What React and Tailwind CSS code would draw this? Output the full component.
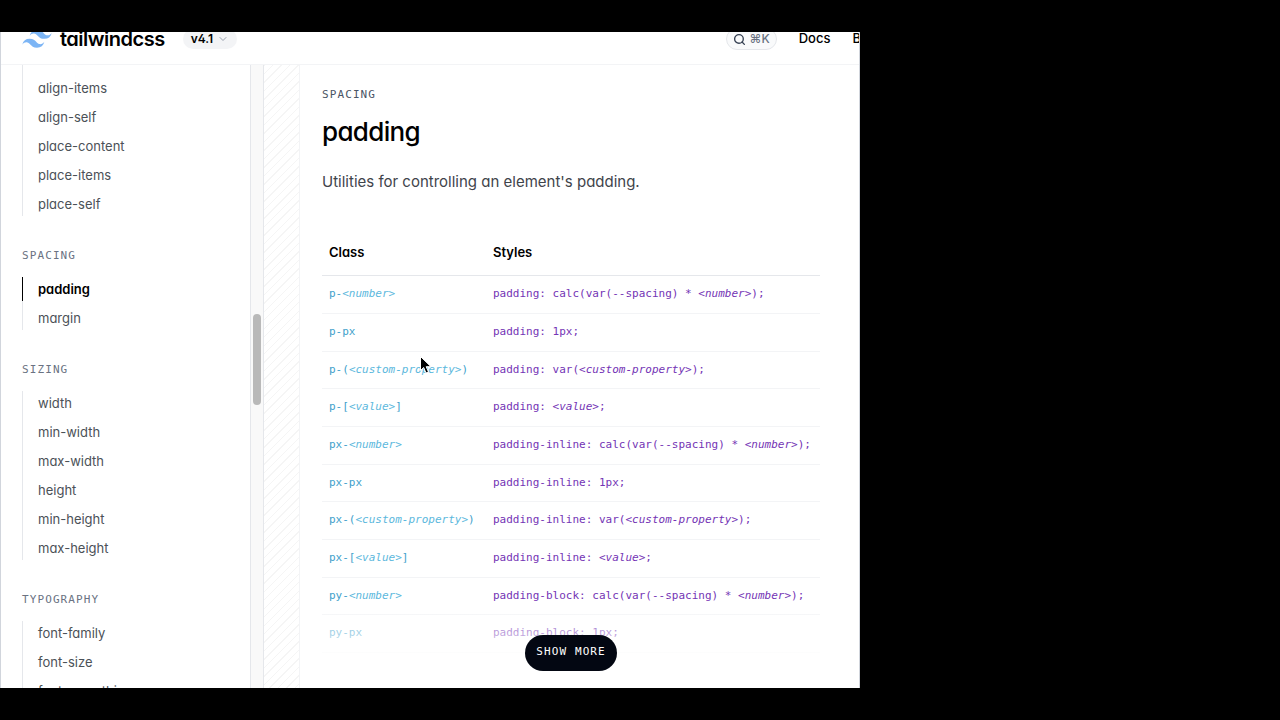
import { LuChevronDown, LuSearch } from 'react-icons/lu'

const sections = [
  { items: ['align-items', 'align-self', 'place-content', 'place-items', 'place-self'] },
  { title: 'SPACING', items: ['padding', 'margin'] },
  { title: 'SIZING', items: ['width', 'min-width', 'max-width', 'height', 'min-height', 'max-height'] },
  { title: 'TYPOGRAPHY', items: ['font-family', 'font-size', 'font-smoothing'] },
]

const rows = [
  ['p-<number>', 'padding: calc(var(--spacing) * <number>);'],
  ['p-px', 'padding: 1px;'],
  ['p-(<custom-property>)', 'padding: var(<custom-property>);'],
  ['p-[<value>]', 'padding: <value>;'],
  ['px-<number>', 'padding-inline: calc(var(--spacing) * <number>);'],
  ['px-px', 'padding-inline: 1px;'],
  ['px-(<custom-property>)', 'padding-inline: var(<custom-property>);'],
  ['px-[<value>]', 'padding-inline: <value>;'],
  ['py-<number>', 'padding-block: calc(var(--spacing) * <number>);'],
  ['py-px', 'padding-block: 1px;'],
]

// Sets every <placeholder> in italics
function Code({ text, className, placeholder }) {
  return (
    <code className={className}>
      {text.split(/(<[^>]+>)/).map((part, i) =>
        part.startsWith('<') ? <i key={i} className={placeholder}>{part}</i> : part
      )}
    </code>
  )
}

function Header() {
  return (
    <header className="h-[33px] shrink-0 overflow-hidden border-b border-gray-100">
      <div className="-mt-5 flex h-[54px] items-center pl-[21px] text-[13px] font-medium text-black">
        <a href="#" className="flex items-center gap-2" aria-label="tailwindcss home">
          <svg viewBox="0 0 54 33" className="h-[18px] w-[30px]" fill="#7cb5f5">
            <path d="M27 0c-7.2 0-11.7 3.6-13.5 10.8 2.7-3.6 5.85-4.95 9.45-4.05 2.054.513 3.522 2.004 5.147 3.653C30.744 13.09 33.808 16.2 40.5 16.2c7.2 0 11.7-3.6 13.5-10.8-2.7 3.6-5.85 4.95-9.45 4.05-2.054-.513-3.522-2.004-5.147-3.653C36.756 3.11 33.692 0 27 0zM13.5 16.2C6.3 16.2 1.8 19.8 0 27c2.7-3.6 5.85-4.95 9.45-4.05 2.054.514 3.522 2.004 5.147 3.653C17.244 29.29 20.308 32.4 27 32.4c7.2 0 11.7-3.6 13.5-10.8-2.7 3.6-5.85 4.95-9.45 4.05-2.054-.513-3.522-2.004-5.147-3.653C23.256 19.31 20.192 16.2 13.5 16.2z" />
          </svg>
          <span className="text-xl leading-6 font-semibold tracking-tight">tailwindcss</span>
        </a>
        <button type="button" className="ml-[18px] flex h-5 items-center gap-1 rounded-full bg-gray-100 px-2 text-[12px] font-semibold">
          v4.1
          <LuChevronDown className="size-3 text-gray-400" />
        </button>
        <div className="flex-1" />
        <button type="button" aria-label="Search" className="flex h-[22px] items-center gap-1 rounded-full border border-gray-200 bg-gray-50 px-[6px] text-xs text-gray-500">
          <LuSearch className="size-[13px] text-gray-700" strokeWidth={2.5} />
          ⌘K
        </button>
        <a href="#" className="ml-[22px]">Docs</a>
        <a href="#" className="-mr-[21px] ml-[22px]">Blog</a>
      </div>
    </header>
  )
}

function Sidebar() {
  return (
    <aside className="flex w-[263px] shrink-0 border-r border-gray-200">
      <nav className="flex-1 overflow-hidden border-r border-gray-200 pl-[21px]">
        {sections.map(({ title, items }) => (
          <section key={items[0]} className="mb-8">
            {title && <h2 className="mb-[13px] font-['DejaVu_Sans_Mono',monospace] text-[11px] leading-4 tracking-widest text-gray-500">{title}</h2>}
            <ul className="flex flex-col gap-[5px] border-l border-gray-200 text-[13px] leading-6 text-[#4b5157] first:pt-[11px]">
              {items.map((item) => (
                <li key={item} className="-ml-px flex">
                  <a
                    href={`#${item}`}
                    className={item === 'padding' ? 'border-l border-black pl-[15px] font-semibold text-black' : 'border-l border-transparent pl-[15px]'}
                  >
                    {item}
                  </a>
                </li>
              ))}
            </ul>
          </section>
        ))}
      </nav>
      <div className="w-3 bg-[#f9f9f9] pl-[2px]">
        <div className="mt-[249px] h-[91px] w-2 rounded-full bg-[#b9b9b9]" />
      </div>
    </aside>
  )
}

function ClassTable() {
  return (
    <div className="relative">
      <table className="w-full text-left">
        <thead className="text-[13px] text-black">
          <tr className="h-11 border-b border-gray-200">
            <th className="w-[171px] pl-[7px] font-semibold">Class</th>
            <th className="font-semibold">Styles</th>
          </tr>
        </thead>
        <tbody className="font-['DejaVu_Sans_Mono',monospace] text-[11px] leading-4">
          {rows.map(([name, css]) => (
            <tr key={name} className="h-[38px] border-b border-gray-100 [&:nth-child(3n)]:h-[37px]">
              <td className="pl-[7px]"><Code text={name} className="font-[inherit] text-[#429fcb]" placeholder="text-[#5cb8dd]" /></td>
              <td><Code text={css} className="font-[inherit] whitespace-nowrap text-[#7434b5]" placeholder="text-[#7434b5]" /></td>
            </tr>
          ))}
        </tbody>
      </table>
      <div className="absolute inset-x-0 -bottom-[18px] flex h-[72px] items-end justify-center bg-linear-to-t from-white from-10% to-white/0">
        <button type="button" className="h-9 rounded-full bg-[#030712] px-[11px] font-['DejaVu_Sans_Mono',monospace] text-[11px] tracking-widest text-white">
          SHOW MORE
        </button>
      </div>
    </div>
  )
}

export default function App() {
  return (
    <div className="flex h-screen bg-black py-8 font-[Inter,'Noto_Sans',sans-serif] [font-feature-settings:'cv02','cv03','cv04','cv11']">
      <div className="relative flex w-[67.2%] flex-col overflow-hidden border-x border-gray-300 bg-white">
        <Header />
        <div className="flex min-h-0 flex-1">
          <Sidebar />
          <div className="w-9 shrink-0 border-r border-gray-100 bg-[repeating-linear-gradient(135deg,#f5f5f5_0,#f5f5f5_1px,transparent_1px,transparent_6px)]" />
          <main className="flex-1 pt-[22px] pr-[39px] pl-[22px]">
            <p className="font-['DejaVu_Sans_Mono',monospace] text-[11px] leading-4 tracking-widest text-gray-600">SPACING</p>
            <h1 className="mt-[11px] text-[26px] leading-9 font-medium tracking-tight text-black">padding</h1>
            <p className="mt-5 mb-[37px] text-[15px] leading-6 text-[#3f444b]">Utilities for controlling an element's padding.</p>
            <ClassTable />
          </main>
        </div>
        <svg viewBox="0 0 12 18" className="absolute top-[324px] left-[419px] h-[18px] w-3" stroke="white">
          <path d="M.5.5v14l3.200-3 2.300 5.500 2.500-1-2.300-5.300h4.800z" />
        </svg>
      </div>
    </div>
  )
}
